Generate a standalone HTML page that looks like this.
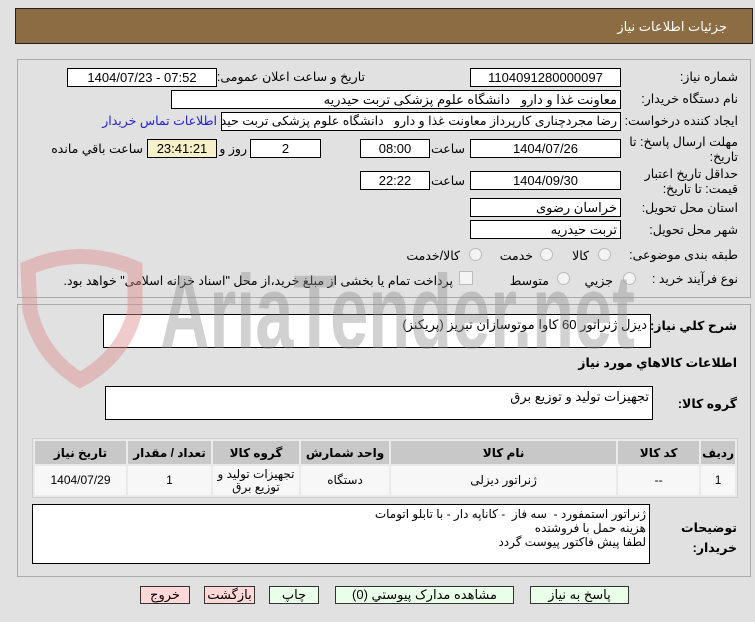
<!DOCTYPE html>
<html><head><meta charset="utf-8"><style>
body{margin:0;width:755px;height:622px;background:#e1e1e1;font-family:"Liberation Sans","DejaVu Sans",sans-serif;font-size:12px;color:#000;position:relative;overflow:hidden}
.a{position:absolute}
.f{position:absolute;background:#fff;border:1px solid #000;box-sizing:border-box;text-align:center;font-size:13px;line-height:17px;white-space:nowrap;overflow:hidden}
.r{text-align:right;padding-right:3px;direction:rtl}
.l{position:absolute;direction:rtl;white-space:nowrap;font-size:12.5px}
.rad{position:absolute;width:11px;height:11px;border:1px solid #bbb;border-radius:50%;background:#f4f4f4}
.btn{position:absolute;top:586px;height:18px;border:1px solid #333;box-sizing:border-box;text-align:center;font-size:13px;line-height:16px;direction:rtl}
table{border-collapse:separate;border-spacing:2px;position:absolute;left:32px;top:438px;width:706px;background:#eaeaea;border:1px solid #ccc;direction:rtl}
th{background:#c8c8c8;height:21px;font-size:12px}
td{background:#f7f7f7;height:27px;text-align:center;font-size:12px;line-height:13px}
</style></head><body>
<div class="a" style="left:15px;top:8px;width:738px;height:36px;background:#8c6c42;border:1px solid #222;box-sizing:border-box"></div>
<div class="l" style="right:28px;top:19px;color:#fff;font-size:13px">جزئیات اطلاعات نیاز</div>

<div class="a" style="left:17px;top:59px;width:734px;height:239px;border:1px solid #aaa;box-sizing:border-box"></div>
<div class="a" style="left:17px;top:304px;width:734px;height:273px;border:1px solid #aaa;box-sizing:border-box"></div>

<div class="l" style="right:17px;top:69px">شماره نیاز:</div>
<div class="f" style="left:470px;top:68px;width:151px;height:19px">1104091280000097</div>
<div class="l" style="right:390px;top:69px">تاریخ و ساعت اعلان عمومی:</div>
<div class="f" style="left:67px;top:68px;width:150px;height:19px">1404/07/23 - 07:52</div>

<div class="l" style="right:17px;top:91px">نام دستگاه خریدار:</div>
<div class="f r" style="left:171px;top:90px;width:450px;height:19px">معاونت غذا و دارو &nbsp; دانشگاه علوم پزشکی تربت حیدریه</div>

<div class="l" style="right:17px;top:113px">ایجاد کننده درخواست:</div>
<div class="f r" style="left:221px;top:112px;width:400px;height:19px;font-size:12.5px">رضا مجردچناری کارپرداز معاونت غذا و دارو &nbsp; دانشگاه علوم پزشکی تربت حیدریه</div>
<div class="l" style="right:538px;top:113px;color:#2222cc">اطلاعات تماس خریدار</div>

<div class="l" style="right:17px;top:135px;line-height:15px">مهلت ارسال پاسخ: تا<br>تاریخ:</div>
<div class="f" style="left:470px;top:139px;width:151px;height:19px">1404/07/26</div>
<div class="l" style="right:290px;top:141px">ساعت</div>
<div class="f" style="left:360px;top:139px;width:70px;height:19px">08:00</div>
<div class="f" style="left:250px;top:139px;width:71px;height:19px">2</div>
<div class="l" style="right:508px;top:141px">روز و</div>
<div class="f" style="left:147px;top:139px;width:70px;height:19px;background:#f5f0c8">23:41:21</div>
<div class="l" style="right:612px;top:141px">ساعت باقي مانده</div>

<div class="l" style="right:17px;top:167px;line-height:15px">حداقل تاریخ اعتبار<br>قیمت: تا تاریخ:</div>
<div class="f" style="left:470px;top:171px;width:151px;height:19px">1404/09/30</div>
<div class="l" style="right:290px;top:173px">ساعت</div>
<div class="f" style="left:360px;top:171px;width:70px;height:19px">22:22</div>

<div class="l" style="right:17px;top:200px">استان محل تحویل:</div>
<div class="f r" style="left:470px;top:198px;width:151px;height:19px">خراسان رضوی</div>
<div class="l" style="right:17px;top:222px">شهر محل تحویل:</div>
<div class="f r" style="left:470px;top:220px;width:151px;height:19px">تربت حیدریه</div>

<div class="l" style="right:17px;top:247px">طبقه بندی موضوعی:</div>
<div class="rad" style="left:598px;top:248px"></div><div class="l" style="right:166px;top:248px">کالا</div>
<div class="rad" style="left:540px;top:248px"></div><div class="l" style="right:222px;top:248px">خدمت</div>
<div class="rad" style="left:469px;top:248px"></div><div class="l" style="right:295px;top:248px">کالا/خدمت</div>

<div class="l" style="right:17px;top:271px">نوع فرآیند خرید :</div>
<div class="rad" style="left:623px;top:272px"></div><div class="l" style="right:142px;top:273px">جزیي</div>
<div class="rad" style="left:557px;top:272px"></div><div class="l" style="right:206px;top:273px">متوسط</div>
<div class="a" style="left:459px;top:271px;width:12px;height:12px;border:1px solid #bbb;background:#f4f4f4"></div>
<div class="l" style="right:302px;top:273px">پرداخت تمام یا بخشی از مبلغ خرید،از محل "اسناد خزانه اسلامی" خواهد بود.</div>

<div class="l" style="right:18px;top:318px;font-weight:bold">شرح كلي نياز:</div>
<div class="f r" style="left:103px;top:314px;width:548px;height:34px;background:#fff;line-height:16px;padding-top:2px">دیزل ژنراتور 60 کاوا موتوسازان تبریز (پریکنز)</div>
<div class="l" style="right:18px;top:355px;font-weight:bold">اطلاعات كالاهاي مورد نياز</div>
<div class="l" style="right:18px;top:396px;font-weight:bold">گروه کالا:</div>
<div class="f r" style="left:105px;top:386px;width:548px;height:34px;line-height:16px;padding-top:2px">تجهیزات تولید و توزیع برق</div>

<table>
<tr><th style="width:26px">رديف</th><th style="width:79px">کد کالا</th><th>نام کالا</th><th style="width:86px">واحد شمارش</th><th style="width:84px">گروه کالا</th><th style="width:81px">تعداد / مقدار</th><th style="width:89px">تاریخ نیاز</th></tr>
<tr><td>1</td><td>--</td><td>ژنراتور دیزلی</td><td>دستگاه</td><td>تجهیزات تولید و<br>توزیع برق</td><td>1</td><td>1404/07/29</td></tr>
</table>

<div class="l" style="right:18px;top:518px;font-weight:bold;line-height:20px">توضیحات<br>خریدار:</div>
<div class="f r" style="left:32px;top:504px;width:618px;height:60px;line-height:14px;padding-top:2px;font-size:12px">ژنراتور استمفورد - &nbsp;سه فاز &nbsp;- کاناپه دار - با تابلو اتومات<br>هزینه حمل با فروشنده<br>لطفا پیش فاکتور پیوست گردد</div>

<div class="btn" style="left:530px;width:99px;background:#eaffea">پاسخ به نیاز</div>
<div class="btn" style="left:335px;width:179px;background:#eaffea">مشاهده مدارک پیوستي (0)</div>
<div class="btn" style="left:269px;width:50px;background:#eaffea">چاپ</div>
<div class="btn" style="left:204px;width:51px;background:#ffd8d8">بازگشت</div>
<div class="btn" style="left:140px;width:50px;background:#ffd8d8">خروج</div>

<!-- watermark on top -->
<svg class="a" style="left:0;top:240px;pointer-events:none" width="660" height="150">
<path d="M28 28 Q80 5 135 28 L135 70 Q125 115 80 140 Q40 115 30 70 Z" fill="none" stroke="rgba(220,140,140,0.45)" stroke-width="15"/>
<text x="160" y="108" font-family="Liberation Sans" font-weight="bold" font-size="105" fill="rgba(140,140,140,0.4)" textLength="475" lengthAdjust="spacingAndGlyphs">AriaTender.net</text>
</svg>
</body></html>
